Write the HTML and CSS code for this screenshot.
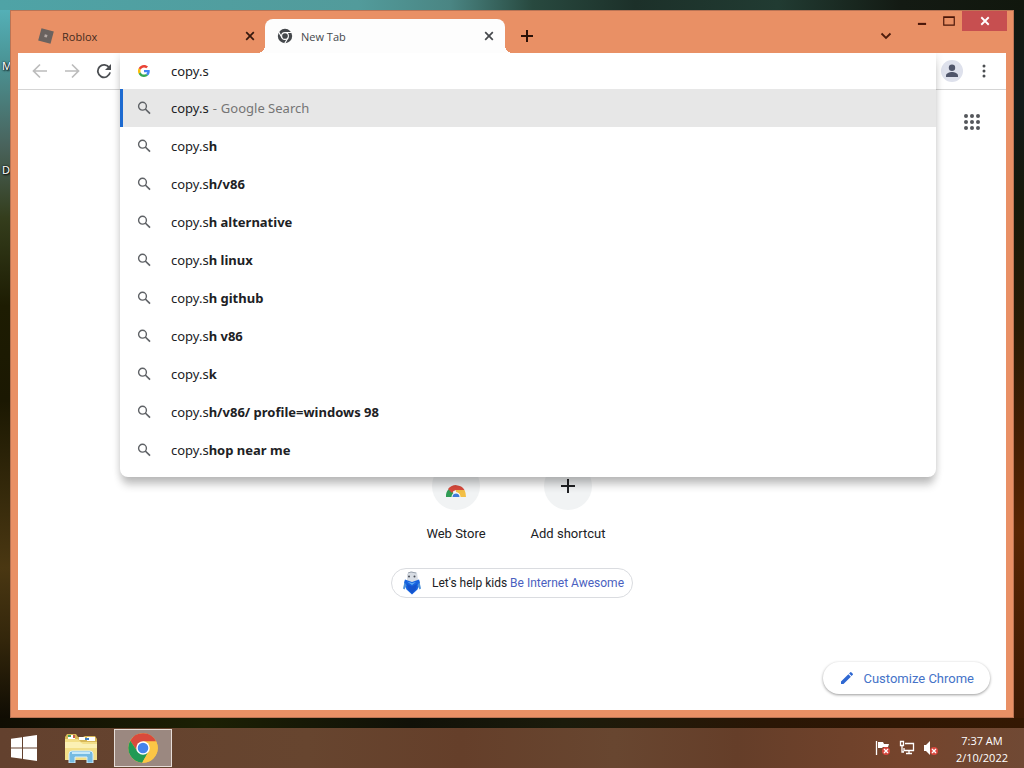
FILE: index.html
```html
<!DOCTYPE html>
<html lang="en">
<head>
<meta charset="utf-8">
<title>New Tab</title>
<link rel="stylesheet" href="styles.css">
</head>
<body>
<svg class="defs" aria-hidden="true">
  <symbol id="search" viewBox="0 0 16 16"><circle cx="6.500" cy="6.200" r="3.900" fill="none" stroke="currentColor" stroke-width="1.400"/><path d="M9.300 9 14 13.700" stroke="currentColor" stroke-width="1.700"/></symbol>
  <symbol id="close" viewBox="0 0 10 10"><path d="M1.200 1.200 8.800 8.800M8.800 1.200 1.200 8.800" fill="none" stroke="currentColor" stroke-width="1.700"/></symbol>
</svg>
<div class="desktop">
  <span class="desk-label desk-label-m">M</span>
  <span class="desk-label desk-label-d">D</span>
  <main class="window">
    <header class="titlebar">
      <div class="tabs">
        <div class="tab">
          <svg class="tab-icon" viewBox="0 0 16 16"><path d="M3.500.3 15.800 3.500 12.500 15.800.2 12.500z" fill="#6a625f"/><path d="M6.900 6.300l2.600.7-.7 2.600-2.600-.7z" fill="#b5aaa5"/></svg>
          <span class="tab-title">Roblox</span>
          <button class="tab-close" aria-label="Close Roblox"><svg viewBox="0 0 10 10"><use href="#close"/></svg></button>
        </div>
        <div class="tab tab-active">
          <svg class="tab-icon" viewBox="0 0 16 16"><circle cx="8" cy="8" r="7.200" fill="#45484c"/><g stroke="#fff" stroke-width="1.100" fill="none"><path d="M8 4.500h6.800M5 9.750 1.600 3.900M11 9.750 7.600 15.600"/><circle cx="8" cy="8" r="3.400"/></g><circle cx="8" cy="8" r="2" fill="#45484c"/></svg>
          <span class="tab-title">New Tab</span>
          <button class="tab-close" aria-label="Close New Tab"><svg viewBox="0 0 10 10"><use href="#close"/></svg></button>
        </div>
        <button class="new-tab" aria-label="New tab"><svg viewBox="0 0 12 12"><path d="M6 0v12M0 6h12" stroke="currentColor" stroke-width="2"/></svg></button>
      </div>
      <button class="tab-search" aria-label="Search tabs"><svg viewBox="0 0 12 8"><path d="M1.500 1.500 6 6l4.500-4.500" fill="none" stroke="currentColor" stroke-width="1.800"/></svg></button>
      <div class="window-buttons">
        <button class="win-btn" aria-label="Minimize"><svg viewBox="0 0 12 12"><path d="M2.500 8.500h7" stroke="currentColor" stroke-width="1.800"/></svg></button>
        <button class="win-btn" aria-label="Maximize"><svg viewBox="0 0 12 12"><path d="M1.500 2.500h9v7h-9zM1 3h10" fill="none" stroke="currentColor"/></svg></button>
        <button class="win-btn win-close" aria-label="Close"><svg viewBox="0 0 12 12"><path d="M2.800 2.800 9.200 9.200M9.200 2.800 2.800 9.200" stroke="currentColor" stroke-width="1.600"/></svg></button>
      </div>
    </header>
    <div class="client">
      <nav class="toolbar">
        <button class="tool tool-off" aria-label="Back"><svg viewBox="0 0 16 16"><path d="M15 8H2M8 1.500 1.500 8 8 14.500" fill="none" stroke="currentColor" stroke-width="1.700"/></svg></button>
        <button class="tool tool-off" aria-label="Forward"><svg viewBox="0 0 16 16"><path d="M1 8h13M8 1.500 14.500 8 8 14.500" fill="none" stroke="currentColor" stroke-width="1.700"/></svg></button>
        <button class="tool" aria-label="Reload"><svg viewBox="0 0 16 16"><path d="M13.300 4.800A6.200 6.200 0 1 0 14.100 9.400" fill="none" stroke="currentColor" stroke-width="1.800"/><path d="M15 1v6H9z" fill="currentColor"/></svg></button>
        <div class="omnibox">
          <div class="popup">
            <div class="omni-row">
              <svg class="g-logo" viewBox="0 0 48 48"><path fill="#EA4335" d="M24 9.500c3.540 0 6.710 1.220 9.210 3.600l6.850-6.850C35.900 2.380 30.470 0 24 0 14.620 0 6.510 5.380 2.560 13.220l7.980 6.190C12.430 13.720 17.740 9.500 24 9.500z"/><path fill="#4285F4" d="M46.980 24.550c0-1.570-.15-3.090-.38-4.550H24v9.020h12.940c-.58 2.960-2.260 5.480-4.780 7.180l7.730 6c4.510-4.180 7.090-10.360 7.090-17.650z"/><path fill="#FBBC05" d="M10.530 28.590A14.500 14.500 0 0 1 9.770 24c0-1.600.27-3.140.76-4.590l-7.980-6.190A24 24 0 0 0 0 24c0 3.880.92 7.540 2.560 10.780l7.970-6.190z"/><path fill="#34A853" d="M24 48c6.480 0 11.930-2.130 15.890-5.810l-7.730-6c-2.150 1.450-4.920 2.300-8.160 2.300-6.260 0-11.570-4.220-13.470-9.910l-7.980 6.190C6.510 42.620 14.620 48 24 48z"/></svg>
              <input class="omni-input" type="text" value="copy.s" aria-label="Address and search bar">
            </div>
            <ul class="suggestions">
              <li class="suggestion selected"><svg class="mag"><use href="#search"/></svg><span class="query">copy.s</span><span class="dash">-</span><span class="hint">Google Search</span></li>
              <li class="suggestion"><svg class="mag"><use href="#search"/></svg><span>copy.s<b>h</b></span></li>
              <li class="suggestion"><svg class="mag"><use href="#search"/></svg><span>copy.s<b>h/v86</b></span></li>
              <li class="suggestion"><svg class="mag"><use href="#search"/></svg><span>copy.s<b>h alternative</b></span></li>
              <li class="suggestion"><svg class="mag"><use href="#search"/></svg><span>copy.s<b>h linux</b></span></li>
              <li class="suggestion"><svg class="mag"><use href="#search"/></svg><span>copy.s<b>h github</b></span></li>
              <li class="suggestion"><svg class="mag"><use href="#search"/></svg><span>copy.s<b>h v86</b></span></li>
              <li class="suggestion"><svg class="mag"><use href="#search"/></svg><span>copy.s<b>k</b></span></li>
              <li class="suggestion"><svg class="mag"><use href="#search"/></svg><span>copy.s<b>h/v86/ profile=windows 98</b></span></li>
              <li class="suggestion"><svg class="mag"><use href="#search"/></svg><span>copy.s<b>hop near me</b></span></li>
            </ul>
          </div>
        </div>
        <button class="tool" aria-label="Profile"><svg class="avatar" viewBox="0 0 22 22"><circle cx="11" cy="11" r="11" fill="#dee1ec"/><circle cx="11" cy="7.800" r="3.200" fill="#50566b"/><path d="M5 17v-1.500c0-2.300 3.500-3.500 6-3.500s6 1.200 6 3.500V17z" fill="#50566b"/></svg></button>
        <button class="tool" aria-label="Menu"><svg viewBox="0 0 16 16" fill="currentColor"><circle cx="8" cy="3" r="1.500"/><circle cx="8" cy="8" r="1.500"/><circle cx="8" cy="13" r="1.500"/></svg></button>
      </nav>
      <section class="page">
        <div class="page-top">
          <button class="apps" aria-label="Google apps"><svg viewBox="0 0 16 16" fill="#54575b"><circle cx="2" cy="2" r="2"/><circle cx="8" cy="2" r="2"/><circle cx="14" cy="2" r="2"/><circle cx="2" cy="8" r="2"/><circle cx="8" cy="8" r="2"/><circle cx="14" cy="8" r="2"/><circle cx="2" cy="14" r="2"/><circle cx="8" cy="14" r="2"/><circle cx="14" cy="14" r="2"/></svg></button>
        </div>
        <div class="shortcuts">
          <a class="shortcut" href="#"><span class="bubble"><svg class="store" viewBox="0 0 20 14"><path d="M0 14A10 10 0 0 1 4 5l4 6-2 3z" fill="#2f9c55"/><path d="M2 6a10 10 0 0 1 16.500 1H10a5 5 0 0 0-4 3z" fill="#d94a3c"/><path d="M10 7h8.500q1.500 3 1.500 7h-6q0-4-4-5z" fill="#f3bf45"/><path d="M5.500 14a4.500 4.500 0 0 1 9 0z" fill="#fff"/><path d="M6.500 14a3.500 3.500 0 0 1 7 0z" fill="#3f7ad8"/></svg></span><span>Web Store</span></a>
          <a class="shortcut" href="#"><span class="bubble"><svg class="plus" viewBox="0 0 14 14"><path d="M7 0v14M0 7h14" stroke="#202124" stroke-width="2"/></svg></span><span>Add shortcut</span></a>
        </div>
        <p class="promo">
          <svg class="mascot" viewBox="0 0 20 24"><path d="M5 3 9 .5l6 1 1 7.500-5 3-6-2.500z" fill="#d8dde4"/><path d="M6 2l3-1 5 1" stroke="#9ba4af" fill="none"/><circle cx="7" cy="5.500" r="1" fill="#454a55"/><circle cx="12.500" cy="5.500" r="1" fill="#454a55"/><path d="M3 8.500 10 11l7-2.500 1 3-2.500 7L10 23.500l-5.500-5L2 11.500z" fill="#1763df"/><path d="M5 13l5 2.500 5-2.500-1 5-4 4.500L6 18z" fill="#1453cc"/><path d="M5 10.500 10 12l4-1-4 3z" fill="#5eabf4"/><path d="M2.500 11 1 17.500l1.500 1 2-4zM17.500 11l1.500 6.500-1.500 1-2-4z" fill="#4d91d9"/></svg>
          <span>Let's help kids <a class="link" href="#">Be Internet Awesome</a></span>
        </p>
        <button class="customize"><svg class="pencil" viewBox="0 0 24 24"><path d="M3 17.250V21h3.750L17.810 9.940l-3.750-3.750L3 17.250zM20.710 7.040a1 1 0 0 0 0-1.410l-2.340-2.340a1 1 0 0 0-1.410 0l-1.830 1.830 3.750 3.750 1.830-1.830z" fill="#2f68d2"/></svg>Customize Chrome</button>
      </section>
    </div>
  </main>
</div>
<footer class="taskbar">
  <button class="task start" aria-label="Start"><svg viewBox="0 0 26 26"><path d="M0 3.800 11 2.200V12.400H0zM12 2 26 0v12.400H12zM0 13.400h11v10.400L0 22.200zM12 13.400h14V26l-14-2z" fill="#fff"/></svg></button>
  <button class="task explorer" aria-label="File Explorer"><svg viewBox="0 0 34 30"><path d="M1 4 3 1h9l2 3h5l2-1h10l2 3v20H1z" fill="#d8b858"/><path d="M4 2h7v4H4zM15 4h6v3h-6zM23 4h8v4h-8z" fill="#fff"/><path d="M4 2h3v2H4z" fill="#45a35d"/><path d="M9 2h2v3H9z" fill="#c45e46"/><path d="M21 5h4v2h-4z" fill="#3f7fc0"/><path d="M1 6h13l3 3h16v18H1z" fill="#f3df88"/><path d="M1 9h15l3 2h14v4H1z" fill="#fbf0b4"/><path d="M5 30V21q0-3 3-3h18q3 0 3 3v9h-6v-6H11v6z" fill="#75bbe2" stroke="#d6eefa"/><path d="M8 20h18" stroke="#c6e9fa" stroke-width="2"/></svg></button>
  <button class="task task-active" aria-label="Google Chrome"><svg viewBox="0 0 48 48"><circle cx="24" cy="24" r="23.500" fill="#fbc646"/><path d="M24 13.500h21.100A23.500 23.500 0 0 0 3.600 12.300L15 29.300 24 24z" fill="#d94a3c"/><path d="M3.600 12.300A23.500 23.500 0 0 0 22.700 47.500L33.100 29.300 24 24l-9.100 5.300z" fill="#219a55"/><path d="M24 13.500h21.100A23.500 23.500 0 0 1 22.700 47.500L33.100 29.300z" fill="#fbc646"/><circle cx="24" cy="24" r="10.800" fill="#fff"/><circle cx="24" cy="24" r="8.500" fill="#4484ed"/></svg></button>
  <div class="tray">
    <svg viewBox="0 0 16 16"><path d="M1.500 1v14" stroke="#fff" stroke-width="1.300"/><path d="M3 2h5l1 2h5l-1 3h-5l-1 1H3z" fill="#fff"/><circle cx="11" cy="11" r="4" fill="#d9483f"/><path d="m9 9 4 4m0-4-4 4" stroke="#fff" stroke-width="1.300"/></svg>
    <svg viewBox="0 0 16 16"><path d="M6 3.500h8.500v7H5V8M7 13.500h6M10 11v2M1.500 1.500h3v4h-3zM3 6v6h2" fill="none" stroke="#fff" stroke-width="1.300"/></svg>
    <svg viewBox="0 0 16 16"><path d="M1 5h2l4-4v14l-4-4H1z" fill="#fff"/><circle cx="11" cy="11" r="4" fill="#d9483f"/><path d="m9 9 4 4m0-4-4 4" stroke="#fff" stroke-width="1.300"/></svg>
  </div>
  <div class="clock"><span>7:37 AM</span><span>2/10/2022</span></div>
</footer>
</body>
</html>
```
FILE: styles.css
```css
* { box-sizing: border-box; }

body {
  margin: 0;
  min-height: 100vh;
  display: flex;
  flex-direction: column;
  font-family: "Noto Sans", "Open Sans", sans-serif;
  font-size: 13px;
  color: #202124;
  background: #171303;
}

button {
  display: flex;
  align-items: center;
  justify-content: center;
  padding: 0;
  border: 0;
  background: none;
  font: inherit;
  color: inherit;
}

.defs { position: absolute; width: 0; height: 0; }

.desktop {
  position: relative;
  flex: 1;
  display: flex;
  padding: 10px;
  background:
    linear-gradient(90deg, #4fa3a6 0, #529b9b 35%, #4a8583 44%, #28493f 52%, #1c3029 62%, #213b32 76%, #131a13 88%, #11170d 100%) top / 100% 10px no-repeat,
    linear-gradient(90deg, #100d03 0, #1c2004 20%, #111108 40%, #1b1b0b 55%, #2a1605 75%, #341803 100%) bottom / 100% 10px no-repeat,
    linear-gradient(#56b5bd 0, #4b9698 8%, #49635c 20%, #343d1c 30%, #1d1c02 42%, #1b1802 55%, #4a3712 78%, #33260b 88%, #0b0902 100%) left / 10px 100% no-repeat,
    linear-gradient(#11180e 0, #111a19 14%, #17190a 28%, #291b05 45%, #472004 62%, #582604 73%, #3b1a05 100%) right / 10px 100% no-repeat;
}

.desk-label {
  position: absolute;
  left: 2px;
  color: #fff;
  font-size: 11px;
  line-height: 16px;
  text-shadow: 1px 1px 2px #000, 0 0 2px #000;
}
.desk-label-m { top: 58px; }
.desk-label-d { top: 162px; }

.window {
  position: relative;
  flex: 1;
  display: flex;
  flex-direction: column;
  padding: 0 7px 7px;
  border: 1px solid #ba7455;
  background: #e99065;
}

.titlebar { display: flex; height: 42px; }

.tabs { flex: 1; display: flex; align-items: flex-end; }

.tab {
  position: relative;
  display: flex;
  align-items: center;
  flex: 0 1 240px;
  height: 34px;
  padding: 0 10px 0 12px;
  font-family: "Open Sans", sans-serif;
  font-size: 11px;
  color: #452b20;
}
.tab:first-child { flex-basis: 247px; padding-right: 9px; padding-left: 20px; }

.tab-active {
  border-radius: 8px 8px 0 0;
  background: #fdfdfd;
  color: #45484c;
}
.tab-active::before,
.tab-active::after {
  content: "";
  position: absolute;
  bottom: 0;
  width: 8px;
  height: 8px;
}
.tab-active::before { right: 100%; background: radial-gradient(circle at 0 0, transparent 8px, #fdfdfd 8px); }
.tab-active::after { left: 100%; background: radial-gradient(circle at 100% 0, transparent 8px, #fdfdfd 8px); }

.tab-icon { width: 16px; height: 16px; margin-right: 8px; }
.tab-title { flex: 1; }
.tab-close { width: 12px; height: 16px; }
.tab-close svg { width: 10px; height: 10px; }
.tab:first-child .tab-close { color: #35190e; }

.new-tab { width: 28px; height: 34px; margin-left: 8px; color: #2a1007; }
.new-tab svg { width: 12px; height: 12px; }

.tab-search { align-self: flex-end; width: 28px; height: 34px; margin-right: 8px; color: #4d1c0c; }
.tab-search svg { width: 12px; height: 8px; }

.window-buttons { display: flex; margin-right: -1px; color: #4a1609; }
.win-btn { width: 27px; height: 20px; }
.win-btn svg { width: 14px; height: 14px; }
.win-close { width: 45px; background: #c74f50; color: #fff; }

.client {
  flex: 1;
  display: flex;
  flex-direction: column;
  background: #fff;
}

.toolbar {
  display: flex;
  height: 37px;
  padding: 0 6px;
  border-bottom: 1px solid #d5d5d5;
}
.tool { width: 32px; color: #4b4e52; }
.tool svg { width: 16px; height: 16px; }
.tool .avatar { width: 22px; height: 22px; }
.tool-off { color: #bcbcbc; }

.omnibox { position: relative; flex: 1; }

.popup {
  position: absolute;
  z-index: 2;
  top: 0;
  left: 0;
  right: 0;
  padding-bottom: 8px;
  border-radius: 0 0 8px 8px;
  background: #fff;
  box-shadow: 0 10px 8px -2px rgba(0, 0, 0, 0.2), 0 2px 8px rgba(0, 0, 0, 0.14);
  clip-path: inset(0 -20px -30px);
}

.omni-row {
  display: flex;
  align-items: center;
  height: 36px;
  padding-left: 18px;
}
.g-logo { width: 12px; height: 12px; margin-right: 21px; }
.omni-input {
  flex: 1;
  padding: 0;
  border: 0;
  outline: 0;
  background: none;
  font: inherit;
  color: inherit;
}

.suggestions { margin: 0; padding: 0; list-style: none; }
.suggestion {
  display: flex;
  align-items: center;
  height: 38px;
  padding-left: 16px;
}
.mag { width: 16px; height: 16px; margin-right: 19px; color: #5f6266; }
.selected { background: #e7e7e7; box-shadow: inset 3px 0 #1d6ad0; }
.dash { margin: 0 4px; color: #757575; }
.hint { color: #757575; }

.page {
  flex: 1;
  display: flex;
  flex-direction: column;
  align-items: center;
  padding-bottom: 16px;
  font-family: Roboto, sans-serif;
}
.page-top { align-self: stretch; display: flex; justify-content: flex-end; padding: 16px 18px 0; }
.apps { width: 32px; height: 32px; }
.apps svg { width: 16px; height: 16px; }

.shortcuts { display: flex; margin-top: 324px; }
.shortcut {
  display: flex;
  flex-direction: column;
  align-items: center;
  gap: 16px;
  width: 112px;
  line-height: 16px;
  color: #202124;
  text-decoration: none;
}
.bubble {
  display: flex;
  align-items: center;
  justify-content: center;
  width: 48px;
  height: 48px;
  border-radius: 50%;
  background: #f1f3f4;
}
.store { width: 20px; height: 14px; margin-top: 8px; }
.plus { width: 14px; height: 14px; }

.promo {
  display: flex;
  align-items: center;
  gap: 10px;
  height: 30px;
  margin: 26px 0 0;
  padding: 0 8px 0 10px;
  border: 1px solid #dadce0;
  border-radius: 15px;
  font-size: 12px;
}
.mascot { width: 20px; height: 24px; }
.link { color: #4a5fc0; text-decoration: none; }

.customize {
  align-self: flex-end;
  height: 32px;
  margin: auto 16px 0 0;
  padding: 0 16px;
  gap: 8px;
  border-radius: 16px;
  background: #fff;
  box-shadow: 0 1px 3px rgba(0, 0, 0, 0.4);
  color: #4573c8;
}
.pencil { width: 16px; height: 16px; }

.taskbar {
  display: flex;
  align-items: center;
  height: 40px;
  padding-right: 16px;
  background: linear-gradient(90deg, #63412e 0, #67452f 30%, #653f2a 45%, #684630 60%, #653e29 72%, #75442c 88%, #704934 100%);
  color: #fff;
}
.task { width: 58px; height: 40px; margin-right: 4px; }
.start { width: 48px; }
.start svg { width: 26px; height: 26px; }
.explorer svg { width: 34px; height: 30px; }
.task-active { height: 38px; border: 1px solid #e6ddd8; background: #9b8880; }
.task-active svg { width: 30px; height: 30px; }

.tray { display: flex; gap: 8px; margin: 0 17px 0 auto; }
.tray svg { width: 16px; height: 16px; }
.clock {
  display: flex;
  flex-direction: column;
  align-items: center;
  padding-top: 2px;
  font-family: "Open Sans", sans-serif;
  font-size: 11px;
  line-height: 17px;
}
```
